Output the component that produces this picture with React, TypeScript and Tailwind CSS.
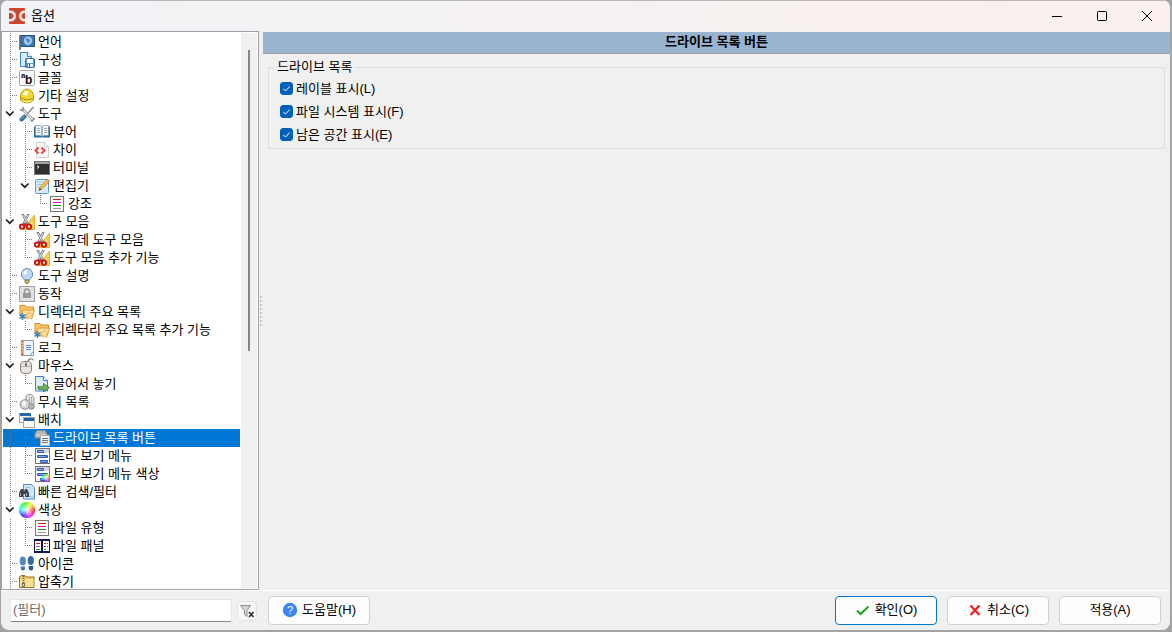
import React, { useState } from 'react';

type Guide = 'line' | 'tee' | 'corner' | 'open' | 'blank';

interface TreeRow {
    label: string;
    icon: keyof typeof icons;
    guides: Guide[];
}

const FONT = "font-['Liberation_Sans','Noto_Sans_CJK_KR',sans-serif]";

const Scissors = (
    <>
        <path d="M15.5 1v14.500H4z" fill="#f9cf45" stroke="#d9a520" strokeWidth=".8" />
        <path d="M13 8v5H9z" fill="#fff3c4" />
        <path d="M3.500 0L9 10M9.500 0L4.500 10" stroke="#777c7e" strokeWidth="2.400" />
        <path d="M4 1l4.500 8M9 1L5 9" stroke="#dfe3e4" />
        <ellipse cx="3" cy="12.600" rx="2.200" ry="2.200" fill="#fff" stroke="#c91414" strokeWidth="2" />
        <ellipse cx="10" cy="12.600" rx="2.200" ry="2.200" fill="#fff" stroke="#c91414" strokeWidth="2" />
        <path d="M4 10.500l2.500-1.500 2.500 1.500-2.500 1.500z" fill="#cf1c1c" />
    </>
);

const StarFolder = (
    <>
        <path d="M1 11.500V1.500h5l1 1.500h7.500v4" fill="#f9c66c" stroke="#dc8b1c" />
        <path d="M1.500 12.500l2.500-6.500h11.500l-2.500 8z" fill="#ffe3a6" stroke="#e39a2c" />
        <path d="M10.500 7.500l1.200 2.500 2.800.3-2 2 .6 3-2.600-1.400-2.600 1.400.6-3-2-2 2.800-.3z" fill="#ffe0a0" stroke="#f2ab42" strokeWidth=".8" />
        <path d="M3.500 9v7M.5 10.700l6 3.600M6.500 10.700l-6 3.600" stroke="#3b83bd" strokeWidth="1.500" />
    </>
);

const WHEEL_STEPS = 36;

const Wheel = ({ cx, cy, r, id }: { cx: number; cy: number; r: number; id: string }) => {
    const step = (Math.PI * 2) / WHEEL_STEPS;
    return (
        <>
            <radialGradient id={id}>
                <stop offset="0" stopColor="#fff" stopOpacity=".9" />
                <stop offset="1" stopColor="#fff" stopOpacity="0" />
            </radialGradient>
            {Array.from({ length: WHEEL_STEPS }, (_, i) => (
                <path
                    key={i}
                    d={`M${cx} ${cy}L${cx + r * Math.cos(i * step)} ${cy + r * Math.sin(i * step)}A${r} ${r} 0 0 1 ${cx + r * Math.cos((i + 1.3) * step)} ${cy + r * Math.sin((i + 1.3) * step)}z`}
                    fill={`hsl(${360 - i * 10} 95% 55%)`}
                />
            ))}
            <circle cx={cx} cy={cy} r={r} fill={`url(#${id})`} />
        </>
    );
};

const Lines = (
    <>
        <rect x="1.500" y=".5" width="13" height="15" fill="#fff" stroke="#777" />
        <path d="M4 3.500h8" stroke="#d21b1b" />
        <path d="M4 6.500h8" stroke="#ee00ee" />
        <path d="M4 9.500h8" stroke="#118a11" />
        <path d="M4 12.500h8" stroke="#9a9a9a" />
    </>
);

const MenuWindow = (
    <>
        <rect x="1.500" y=".5" width="14" height="15" fill="#fff" stroke="#747474" />
        <rect x="2" y="1" width="13" height="4" fill="#d8d8d8" />
        <rect x="3" y="2" width="7" height="3" rx="1" fill="#2c56b4" />
        <path d="M4 3.500h5" stroke="#9db7f2" />
        <rect x="3" y="7" width="11" height="3" rx="1" fill="#2c56b4" />
        <path d="M4 8.500h8" stroke="#86a5ec" />
        <rect x="6" y="12" width="8" height="3" rx="1" fill="#2c56b4" />
        <path d="M7 13.500h6" stroke="#86a5ec" />
    </>
);

const icons = {
    language: (
        <>
            <path d="M1 1v15" stroke="#494949" strokeWidth="1.400" />
            <rect x="2" y="1.500" width="13.500" height="11" fill="#3e79b7" stroke="#285785" />
            <circle cx="9" cy="6.800" r="4.200" fill="#a5cbe9" />
            <path d="M6.500 4.800c1.500-1.500 4 0 4.500 1.500-.5 2-1.500 3-2.500 2.500z" fill="#4f8cc4" />
        </>
    ),
    config: (
        <>
            <path d="M1.500.5h7l4 4v10h-11z" fill="#d8ebfa" stroke="#3c83c4" />
            <path d="M8.500.5v4h4" fill="#fff" stroke="#3c83c4" />
            <rect x="6.500" y="6.500" width="9" height="9" rx="1" fill="#5b98d4" stroke="#2d6aa6" />
            <rect x="8" y="7" width="6" height="4" fill="#fff" />
            <rect x="9" y="12" width="5" height="3" fill="#e6eff7" />
            <path d="M10.500 12v3" stroke="#2d6aa6" />
        </>
    ),
    font: (
        <>
            <rect x=".5" y=".5" width="15" height="15" rx="1" fill="#f8f8f8" stroke="#a8a8a8" />
            <text x="2" y="8" fontSize="8" fontWeight="bold" fontFamily="Liberation Sans" fill="#111">a</text>
            <text x="6" y="14" fontSize="12" fontWeight="bold" fontFamily="Liberation Sans" fill="#111">b</text>
        </>
    ),
    misc: (
        <>
            <path d="M1.500 12V8a6.500 7 0 0 1 13 0v4c-2.500 3.800-10.500 3.800-13 0z" fill="#f2d63a" stroke="#c09c14" />
            <path d="M2 10q6 3.500 12 0" fill="none" stroke="#b8950f" />
            <path d="M3.500 7c.5-3.500 3-4.500 6-4L8 7.500z" fill="#fffde0" />
            <path d="M4 13.200q4 1.500 8 0" fill="none" stroke="#fff39a" />
        </>
    ),
    tools: (
        <>
            <path d="M3.500 3l9.500 10" stroke="#8a8f92" strokeWidth="2.600" />
            <path d="M3.500 3l9.500 10" stroke="#e6eaeb" strokeWidth="1.200" />
            <path d="M1 3.500l2 1 1.500-1.500-1-2" fill="none" stroke="#858a8d" strokeWidth="1.500" />
            <path d="M11.500 14.500l1.500.5 2-2-.5-1.500" fill="none" stroke="#858a8d" strokeWidth="1.500" />
            <path d="M14.500 1L8 8" stroke="#8b9093" strokeWidth="1.500" />
            <path d="M5.500 10.500L2.500 13.500" stroke="#3a6ea8" strokeWidth="4" strokeLinecap="round" />
            <path d="M5 10.200L2.200 13" stroke="#8ab4de" strokeLinecap="round" />
        </>
    ),
    viewer: (
        <>
            <path d="M0 2.500h16v11H0z" fill="#286b9f" />
            <path d="M1.500 1.500h4q2 0 2.500 1.500Q8.500 1.500 10.500 1.500h4v10h-4q-2 0-2.500 1.500Q7.500 11.500 5.500 11.500h-4z" fill="#f4f8fa" stroke="#6c94b2" strokeWidth=".7" />
            <path d="M8 3v10" stroke="#57768e" />
            <path d="M3 4.500h3M3 6.500h3M3 8.500h3M10 4.500h3M10 6.500h3M10 8.500h3" stroke="#9cabb5" />
        </>
    ),
    diff: (
        <>
            <path d="M2.500.5h8l4 4v11h-12z" fill="#f7f7f7" stroke="#cfcfcf" />
            <path d="M10.500.5v4h4" fill="#fff" stroke="#c5c5c5" />
            <path d="M4.500 5.500L1.500 8.500l3 3M7.500 5.500l3 3-3 3" fill="none" stroke="#ee4343" strokeWidth="2" />
        </>
    ),
    terminal: (
        <>
            <rect x=".5" y="1.500" width="15" height="13" fill="#303030" stroke="#777" />
            <rect x="1" y="2" width="14" height="2" fill="#a5a5a5" />
            <path d="M3 5.500l2 1.500-2 1.500" fill="none" stroke="#fff" />
        </>
    ),
    editor: (
        <>
            <rect x="1.500" y="1.500" width="13" height="14" rx="1" fill="#d6eafb" stroke="#5c9ad6" />
            <path d="M3 4h7M3 6.500h6M3 9h4" stroke="#a5caec" />
            <path d="M5 12.500l1-3.500 7.500-8 2 2.200-7.500 8z" fill="#f7c04a" stroke="#bf8424" strokeWidth=".8" />
            <path d="M12.500 2l2 2.200 1-1.200-2-2.200z" fill="#e98a7c" />
            <path d="M5 12.500l.8-2.500 1.500 1.500z" fill="#333" />
        </>
    ),
    lines: Lines,
    toolbar: Scissors,
    tooltip: (
        <>
            <path d="M8 .5a5.700 5.700 0 0 1 3.500 10.200L10.500 12h-5l-1-1.300A5.700 5.700 0 0 1 8 .5z" fill="#bdd9f5" stroke="#6f8fb9" />
            <path d="M4.500 6C4.500 3.500 6 2 8.500 2L7 7z" fill="#fff" />
            <path d="M6 12h4v2.500l-1 1H7l-1-1z" fill="#c6b04d" stroke="#77736a" strokeWidth=".8" />
        </>
    ),
    lock: (
        <>
            <rect x=".5" y=".5" width="15" height="15" fill="#e2e2e2" stroke="#a0a0a0" />
            <path d="M5.500 8V5.500a2.500 2.500 0 0 1 5 0V8" fill="none" stroke="#999" strokeWidth="1.500" />
            <rect x="4" y="7" width="8" height="5" fill="#999" />
        </>
    ),
    hotlist: StarFolder,
    log: (
        <>
            <rect x="2.500" y=".5" width="12" height="15" fill="#eef4fb" stroke="#8d9bad" />
            <rect x="2" y="1" width="2.500" height="14" fill="#d0733a" />
            <path d="M1 3h3M1 6h3M1 9h3M1 12h3" stroke="#e9e2da" />
            <path d="M7 5.500h5M7 7.500h5M7 9.500h5" stroke="#5b8ccc" />
            <path d="M10.500 15.500l4-4" stroke="#8d9bad" />
        </>
    ),
    mouse: (
        <>
            <path d="M9 4c0-4 4-4 5.500-1.500" fill="none" stroke="#777" strokeWidth="1.200" />
            <rect x="1.500" y="3.500" width="11" height="12" rx="3.500" fill="#e8e4e0" stroke="#8c8782" />
            <path d="M2 8.500h10" stroke="#b8b2ac" />
            <rect x="6" y="4.500" width="2" height="4" rx="1" fill="#777" />
        </>
    ),
    drag: (
        <>
            <path d="M1.500.5h8l4 4v10.500h-12z" fill="#dcecfb" stroke="#3c7fc2" />
            <path d="M9.500.5v4h4" fill="#fff" stroke="#3c7fc2" />
            <path d="M4 10.500q4 1 5.500-.5V7.500l6 4.200-6 4.100v-2.600Q6 14 4 13z" fill="#6db35c" stroke="#2f7a26" strokeWidth=".8" />
        </>
    ),
    ignore: (
        <>
            <path d="M6.500 2.500L8.500.5h4l2.500 3v8l-5 2z" fill="#dedede" stroke="#9b9b9b" />
            <path d="M10.500 3v8M12.500 3v8" stroke="#b4b4b4" />
            <ellipse cx="6" cy="10.500" rx="5" ry="4.800" fill="#d4d4d4" stroke="#888" />
            <ellipse cx="5" cy="9.500" rx="2" ry="3" fill="#f5f5f5" />
            <circle cx="12.500" cy="12.500" r="2.800" fill="#b8b8b8" stroke="#888" />
        </>
    ),
    layout: (
        <>
            <rect x=".5" y="1.500" width="11" height="9" fill="#f4f4f4" stroke="#a5a5a5" />
            <rect x="1" y="1" width="11" height="3" fill="#2866a9" />
            <rect x="4.500" y="5.500" width="11" height="10" fill="#f7f7f7" stroke="#a5a5a5" />
            <rect x="5" y="6" width="10" height="3" fill="#1e5fa5" />
        </>
    ),
    drives: (
        <>
            <path d="M1 4l2-3.500h8L13 4v4H1z" fill="#b4b4b4" stroke="#8c8c8c" />
            <path d="M1.500 5h11" stroke="#e4e4e4" />
            <rect x="6.500" y="5.500" width="9" height="10" fill="#f2f2f2" stroke="#b0b0b0" />
            <path d="M8 8.500h6M8 10.500h6M8 12.500h6" stroke="#777" />
        </>
    ),
    treeMenu: MenuWindow,
    treeColors: (
        <>
            {MenuWindow}
            <Wheel cx={12} cy={12} r={4} id="wheel-small" />
        </>
    ),
    search: (
        <>
            <path d="M4.500.5h8l3 3v11.500h-11z" fill="#cfe4f8" stroke="#4c8aca" />
            <path d="M7 12.500h7M7 3.500h4" stroke="#9bc0e6" />
            <path d="M2 5h2l.5 2h1L6 5h2l2 4v4H6v-3H4v3H0V9z" fill="#3d4247" />
            <path d="M1.500 9v3M7.500 9v3" stroke="#a4adb5" />
        </>
    ),
    colors: <Wheel cx={8} cy={8} r={8} id="wheel-large" />,
    panels: (
        <>
            <rect x=".5" y="1.500" width="15" height="13" fill="#fff" stroke="#15154d" />
            <rect x="0" y="1" width="16" height="2" fill="#15154d" />
            <path d="M8 2v13" stroke="#15154d" strokeWidth="2" />
            <path d="M0 13.500h16" stroke="#15154d" />
            <path d="M2 5.500h4M10 5.500h2" stroke="#e21818" />
            <path d="M2 8.500h4" stroke="#e02bd8" />
            <path d="M10 8.500h2" stroke="#2b4de0" />
            <path d="M2 11.500h4M10 11.500h2" stroke="#149a25" />
            <path d="M13 5.500h1M13 8.500h1" stroke="#2b4de0" />
        </>
    ),
    feet: (
        <>
            <ellipse cx="3.800" cy="5" rx="3.100" ry="4.500" fill="#5489bd" />
            <path d="M1.500 10.500h4.500q.5 4-2 4t-2.500-4z" fill="#4278ad" />
            <ellipse cx="11.800" cy="4.500" rx="3.100" ry="4.500" fill="#346a9e" />
            <path d="M9.700 10h4.500q.5 4.500-2.200 4.500T9.700 10z" fill="#285b8e" />
        </>
    ),
    archive: (
        <>
            <path d="M.5 13.500V3L2 1.500h4L7.500 3h7.500v10.500z" fill="#eccb69" stroke="#94702a" />
            <path d="M1 5h13.500v8H1z" fill="#f9e08c" />
            <path d="M4.500 2v8" stroke="#686868" strokeWidth="2" strokeDasharray="1 1" />
            <rect x="3.500" y="9.500" width="2" height="3" fill="#ddd" stroke="#555" strokeWidth=".8" />
        </>
    ),
};

const rows: TreeRow[] = [
    { label: '언어', icon: 'language', guides: ['tee'] },
    { label: '구성', icon: 'config', guides: ['tee'] },
    { label: '글꼴', icon: 'font', guides: ['tee'] },
    { label: '기타 설정', icon: 'misc', guides: ['tee'] },
    { label: '도구', icon: 'tools', guides: ['open'] },
    { label: '뷰어', icon: 'viewer', guides: ['line', 'tee'] },
    { label: '차이', icon: 'diff', guides: ['line', 'tee'] },
    { label: '터미널', icon: 'terminal', guides: ['line', 'tee'] },
    { label: '편집기', icon: 'editor', guides: ['line', 'open'] },
    { label: '강조', icon: 'lines', guides: ['line', 'blank', 'corner'] },
    { label: '도구 모음', icon: 'toolbar', guides: ['open'] },
    { label: '가운데 도구 모음', icon: 'toolbar', guides: ['line', 'tee'] },
    { label: '도구 모음 추가 기능', icon: 'toolbar', guides: ['line', 'corner'] },
    { label: '도구 설명', icon: 'tooltip', guides: ['tee'] },
    { label: '동작', icon: 'lock', guides: ['tee'] },
    { label: '디렉터리 주요 목록', icon: 'hotlist', guides: ['open'] },
    { label: '디렉터리 주요 목록 추가 기능', icon: 'hotlist', guides: ['line', 'corner'] },
    { label: '로그', icon: 'log', guides: ['tee'] },
    { label: '마우스', icon: 'mouse', guides: ['open'] },
    { label: '끌어서 놓기', icon: 'drag', guides: ['line', 'corner'] },
    { label: '무시 목록', icon: 'ignore', guides: ['tee'] },
    { label: '배치', icon: 'layout', guides: ['open'] },
    { label: '드라이브 목록 버튼', icon: 'drives', guides: ['line', 'tee'] },
    { label: '트리 보기 메뉴', icon: 'treeMenu', guides: ['line', 'tee'] },
    { label: '트리 보기 메뉴 색상', icon: 'treeColors', guides: ['line', 'corner'] },
    { label: '빠른 검색/필터', icon: 'search', guides: ['tee'] },
    { label: '색상', icon: 'colors', guides: ['open'] },
    { label: '파일 유형', icon: 'lines', guides: ['line', 'tee'] },
    { label: '파일 패널', icon: 'panels', guides: ['line', 'corner'] },
    { label: '아이콘', icon: 'feet', guides: ['tee'] },
    { label: '압축기', icon: 'archive', guides: ['tee'] },
];

const GuideCell: React.FC<{ kind: Guide; stroke: string }> = ({ kind, stroke }) => (
    <svg viewBox="0 0 15 18" className="h-[18px] w-[15px] shrink-0" fill="none" aria-hidden="true">
        {(kind === 'line' || kind === 'tee') && <path d="M7.500 0v18" stroke={stroke} strokeDasharray="1 1" />}
        {kind === 'corner' && <path d="M7.500 0v9" stroke={stroke} strokeDasharray="1 1" />}
        {(kind === 'tee' || kind === 'corner') && <path d="M9 8.500h5" stroke={stroke} strokeDasharray="1 1" />}
        {kind === 'open' && (
            <>
                <path d="M7.500 0v6" stroke={stroke} strokeDasharray="1 1" />
                <path d="M3 6.500l3.800 3.700 3.800-3.700" stroke="#222" strokeWidth="1.700" />
            </>
        )}
    </svg>
);

const TreeItem: React.FC<{ row: TreeRow; selected: boolean; onSelect: () => void }> = ({ row, selected, onSelect }) => (
    <li role="treeitem" aria-selected={selected} aria-level={row.guides.length}>
        <button
            type="button"
            onClick={onSelect}
            className={`flex h-[18px] w-full items-center whitespace-nowrap text-left ${selected ? 'bg-[#0078d7] text-white' : 'text-black'}`}
        >
            {row.guides.map((g, i) => <GuideCell key={i} kind={g} stroke={selected ? '#8a6a50' : '#808080'} />)}
            <svg viewBox="0 0 16 16" className="ml-px h-4 w-4 shrink-0" fill="none" aria-hidden="true">{icons[row.icon]}</svg>
            <span className="ml-[3px] leading-[18px]">{row.label}</span>
        </button>
    </li>
);

const DialogButton: React.FC<{ children: React.ReactNode; primary?: boolean }> = ({ children, primary }) => (
    <button
        type="button"
        className={`flex h-[29px] w-[102px] items-center justify-center gap-1 rounded border bg-[#fdfdfd] pb-0.5 ${primary ? 'border-[#0078d4]' : 'border-[#d0d0d0]'}`}
    >
        {children}
    </button>
);

const Option: React.FC<{ label: string }> = ({ label }) => {
    const [checked, setChecked] = useState(true);
    return (
        <label className="flex h-[23px] w-fit items-center gap-[3px]">
            <span className="grid">
                <input
                    type="checkbox"
                    checked={checked}
                    onChange={e => setChecked(e.target.checked)}
                    className="peer h-[13px] w-[13px] appearance-none rounded-[3px] border border-[#868686] bg-white [grid-area:1/1] checked:border-[#005fb8] checked:bg-[#005fb8]"
                />
                <svg viewBox="0 0 13 13" className="pointer-events-none invisible h-[13px] w-[13px] [grid-area:1/1] peer-checked:visible" fill="none" aria-hidden="true">
                    <path d="M3.300 6.800l2.200 2.200 4.300-4.500" stroke="#fff" />
                </svg>
            </span>
            {label}
        </label>
    );
};

const App: React.FC = () => {
    const [selected, setSelected] = useState(22);
    const [filter, setFilter] = useState('');

    return (
        <div className={`h-screen bg-[#a3a3a3] pr-0.5 pb-0.5 pl-px text-[13px] leading-5 text-black ${FONT}`}>
            <div className="flex h-full flex-col overflow-hidden rounded-lg bg-[#f0f0f0]">
                <header className="flex h-[31px] shrink-0 items-center border-t border-[#b8b8b8] bg-linear-to-r from-[#f1f3f7] to-[#fbf0ed] pl-2">
                    <svg viewBox="0 0 16 16" className="h-4 w-4" fill="none" aria-hidden="true">
                        <rect width="16" height="16" rx="1" fill="#c9442c" />
                        <path d="M0 2.500h2.500q4.500 1.200 4.500 5.500t-4.500 5.500H0v-2.500h2q2.500-1 2.500-3T2 5H0z" fill="#f6e7df" />
                        <path d="M16 2.500h-1.500q-4.500 1.200-4.500 5.500t4.500 5.500H16v-2.500h-1q-2.500-1-2.500-3t2.500-3h1z" fill="#f6e7df" />
                    </svg>
                    <h1 className="ml-1.5 flex-1">옵션</h1>
                    <div className="flex">
                        <button type="button" aria-label="최소화" className="flex h-[30px] w-[45px] items-center justify-center">
                            <svg viewBox="0 0 12 12" className="h-3 w-3" fill="none"><path d="M1 6.500h10" stroke="#000" /></svg>
                        </button>
                        <button type="button" aria-label="최대화" className="flex h-[30px] w-[45px] items-center justify-center">
                            <svg viewBox="0 0 12 12" className="h-3 w-3" fill="none"><rect x="1.500" y="1.500" width="9" height="9" rx=".8" stroke="#000" /></svg>
                        </button>
                        <button type="button" aria-label="닫기" className="flex h-[30px] w-[46px] items-center justify-center">
                            <svg viewBox="0 0 12 12" className="h-3 w-3" fill="none"><path d="M1 1l10 10M11 1L1 11" stroke="#000" /></svg>
                        </button>
                    </div>
                </header>

                <main className="flex min-h-0 flex-1">
                    <nav className="flex w-[258px] shrink-0 overflow-hidden border border-[#a0a0a5] bg-white" aria-label="옵션">
                        <ul role="tree" className="mt-px ml-px flex-1 overflow-hidden">
                            {rows.map((row, i) => (
                                <TreeItem key={i} row={row} selected={i === selected} onSelect={() => setSelected(i)} />
                            ))}
                        </ul>
                        <div className="my-px mr-px ml-px flex w-4 flex-col items-center bg-[#f0f0f0] pt-[17px]">
                            <div className="h-[56%] w-0.5 bg-[#858585]" />
                        </div>
                    </nav>
                    <div className="flex w-1 shrink-0 items-center justify-center">
                        <div className="h-[30px] border-l-2 border-dotted border-[#c8c8c8]" />
                    </div>
                    <section className="min-w-0 flex-1">
                        <h2 className="mt-px h-[22px] border-b border-[#a0a0a0] bg-[#99b4d1] text-center leading-5 font-bold">드라이브 목록 버튼</h2>
                        <fieldset className="mt-[3px] mr-[5px] ml-[5px] border border-[#dcdcdc] px-[11px] pb-0.5">
                            <legend className="-ml-1.5 px-[3px] leading-5">드라이브 목록</legend>
                            <Option label="레이블 표시(L)" />
                            <Option label="파일 시스템 표시(F)" />
                            <Option label="남은 공간 표시(E)" />
                        </fieldset>
                    </section>
                </main>

                <footer className="flex h-10 shrink-0 items-center border-t border-white pr-[9px] pl-[9px]">
                    <input
                        aria-label="필터"
                        placeholder="(필터)"
                        value={filter}
                        onChange={e => setFilter(e.target.value)}
                        className="h-[23px] w-[222px] rounded-xs border border-[#e5e5e5] border-b-[#868686] bg-white px-0.5 pb-0.5 outline-none placeholder:text-[#6d6d6d]"
                    />
                    <button type="button" aria-label="필터 지우기" className="ml-[5px] flex h-5 w-5 items-center justify-center rounded border border-[#e3e3e3] bg-[#f8f8f8]">
                        <svg viewBox="0 0 16 16" className="h-4 w-4 shrink-0" fill="none" aria-hidden="true">
                            <path d="M1.500 2.500h10L8 7.500v6l-2.500-2v-4z" fill="#d5d5d5" stroke="#8f8f8f" />
                            <path d="M10 9l4.500 5M14.500 9L10 14" stroke="#333" strokeWidth="1.700" />
                        </svg>
                    </button>
                    <div className="ml-[11px] flex flex-1 gap-2.5">
                        <DialogButton>
                            <svg viewBox="0 0 16 16" className="h-4 w-4" aria-hidden="true">
                                <circle cx="8" cy="8" r="7.200" fill="#3b86f7" />
                                <text x="8" y="12" textAnchor="middle" fontSize="11" fontFamily="Liberation Sans" fill="#fff">?</text>
                            </svg>
                            도움말(H)
                        </DialogButton>
                        <div className="flex-1" />
                        <DialogButton primary>
                            <svg viewBox="0 0 16 16" className="h-4 w-4" fill="none" aria-hidden="true">
                                <path d="M2 8.500l3.500 3.500 8-7.500" stroke="#1fa51f" strokeWidth="2" />
                            </svg>
                            확인(O)
                        </DialogButton>
                        <DialogButton>
                            <svg viewBox="0 0 16 16" className="h-4 w-4" fill="none" aria-hidden="true">
                                <path d="M3.500 3.500l9 9.500M12.500 3.500l-9 9.500" stroke="#f01c1c" strokeWidth="2.200" />
                            </svg>
                            취소(C)
                        </DialogButton>
                        <DialogButton>적용(A)</DialogButton>
                    </div>
                </footer>
            </div>
        </div>
    );
};

export default App;
